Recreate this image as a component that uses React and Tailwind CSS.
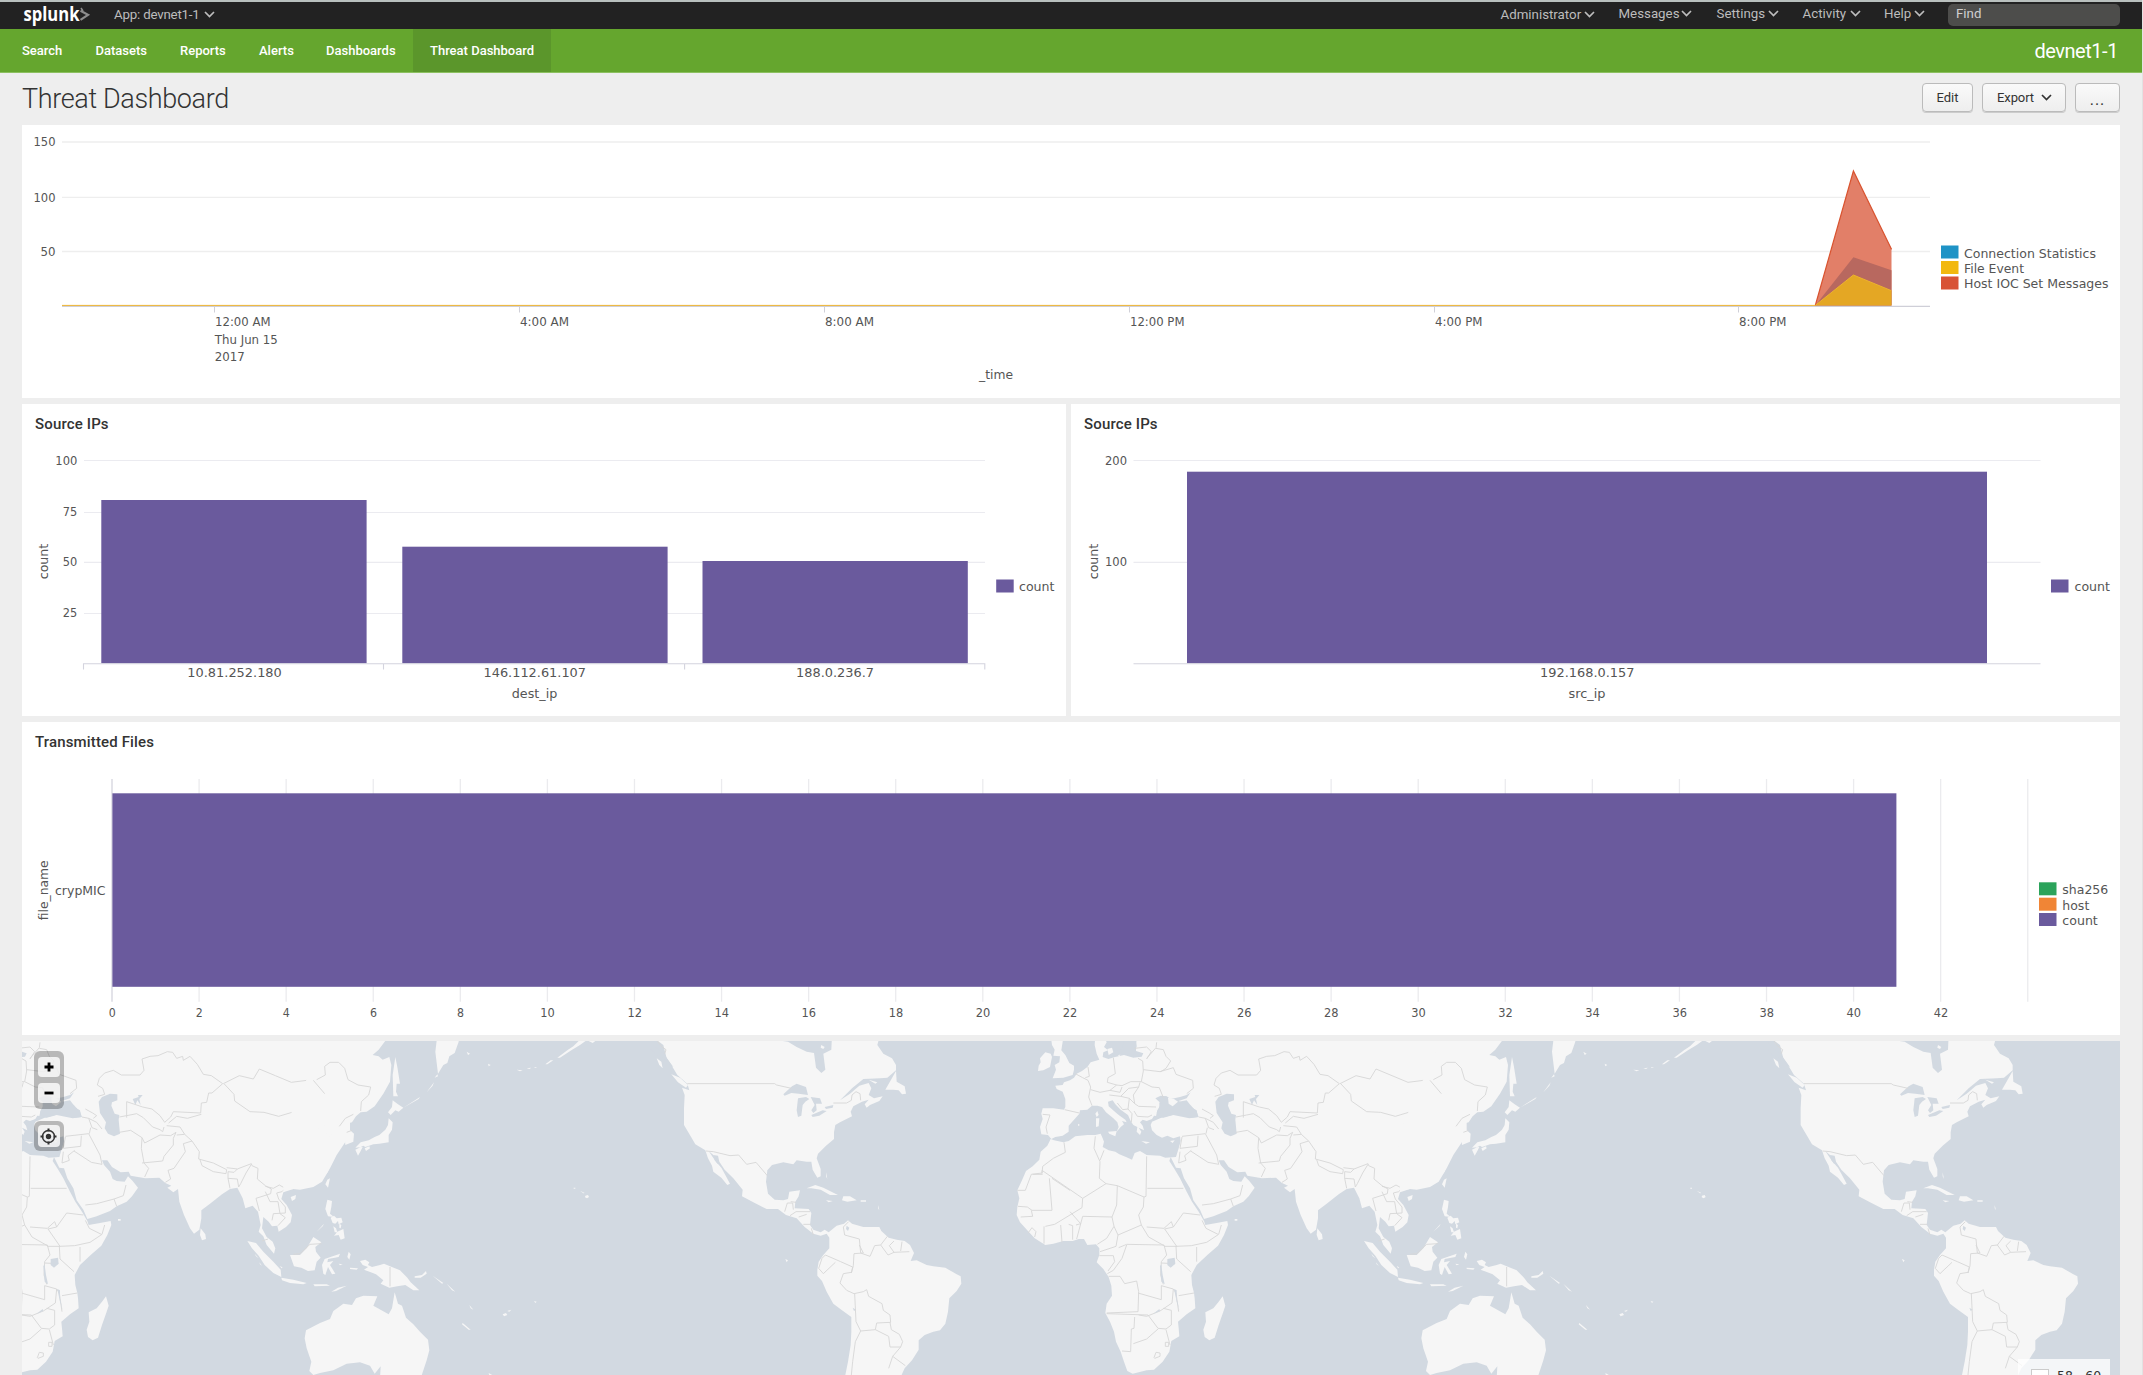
import React from "react";

const PURPLE = "#6a5a9d";

/* ---------- shared bits ---------- */

function Caret({ className = "" }) {
  return (
    <svg className={"shrink-0 " + className} width="11" height="7" viewBox="0 0 11 7" fill="none" stroke="currentColor" strokeWidth="1.7">
      <path d="M1 1 L5.5 5.5 L10 1" />
    </svg>
  );
}

function Label({ x, y, w, size = 12.5, anchor = "start", children, fill = "#555" }) {
  return (
    <text
      x={x}
      y={y - 0.4}
      fontSize={size}
      textAnchor={anchor}
      textLength={w}
      lengthAdjust="spacingAndGlyphs"
      fill={fill}
    >
      {children}
    </text>
  );
}

function VLabel({ x, y, w, children }) {
  return (
    <text
      transform={`translate(${x} ${y}) rotate(-90)`}
      fontSize="13"
      textAnchor="middle"
      textLength={w}
      lengthAdjust="spacingAndGlyphs"
      fill="#555"
    >
      {children}
    </text>
  );
}

function Swatch({ x, y, fill }) {
  return <rect x={x} y={y} width="17.5" height="13" fill={fill} />;
}

function Chart({ x, y, w, h, className = "", children }) {
  return (
    <svg
      className={"block [font-family:'DejaVu_Sans',sans-serif] " + className}
      width={w}
      height={h}
      viewBox={`${x} ${y} ${w} ${h}`}
    >
      {children}
    </svg>
  );
}

/* ---------- header ---------- */

const MENUS = [
  { label: "Administrator", cls: "w-[118px] pt-px", text: "w-[80px]" },
  { label: "Messages", cls: "w-[98px]", text: "w-[59px]" },
  { label: "Settings", cls: "w-[86px]", text: "w-[48px]" },
  { label: "Activity", cls: "w-[81.5px]", text: "w-[44px]" },
  { label: "Help", cls: "w-[64px]", text: "w-[27px]" },
];

function TopBar() {
  return (
    <div className="flex h-[29px] items-start border-t-2 border-[#b9c0be] bg-[#222] text-[13.3px] leading-[16px] text-[#bdbdbd]">
      <svg className="ml-[22px] block shrink-0 overflow-visible" width="70" height="27" viewBox="22 2 70 27">
        <text x="23.5" y="20.6" fontSize="20" fontWeight="700" textLength="56" lengthAdjust="spacingAndGlyphs" fill="#fff" className="[font-family:'Open_Sans',sans-serif]">
          splunk
        </text>
        <path d="M80.5 10.8 L88 14.9 L80.5 19.8" fill="none" stroke="#8d8d8d" strokeWidth="2.2" />
        <path d="M81 8 L83 11" stroke="#8d8d8d" strokeWidth="1.5" />
      </svg>
      <div className="ml-[22px] mt-[5px] flex">
        <span className="w-[90px] whitespace-nowrap tracking-[-0.2px]">App: devnet1-1</span>
        <Caret className="mt-[4px]" />
      </div>
      <div className="ml-auto mt-[4px] flex">
        {MENUS.map((m) => (
          <div key={m.label} className={"flex whitespace-nowrap " + m.cls}>
            <span className={m.text}>{m.label}</span>
            <Caret className="ml-[3px] mt-[4px]" />
          </div>
        ))}
      </div>
      <div className="mr-[22px] mt-[2px] h-[22px] w-[172px] rounded-[5px] bg-[#4d4d4b] pl-[8px] pt-[2px] text-[#d0d0d0]">Find</div>
    </div>
  );
}

const TABS = [
  { label: "Search", cls: "w-[73.5px]" },
  { label: "Datasets", cls: "w-[84.5px]" },
  { label: "Reports", cls: "w-[79px]" },
  { label: "Alerts", cls: "w-[67px]" },
  { label: "Dashboards", cls: "w-[87px]" },
];

function NavBar() {
  return (
    <div className="flex h-[44px] border-b border-[#8cc060] bg-[#65a62e] text-[13px] font-medium leading-[44px] text-white">
      <div className="flex pl-[22px]">
        {TABS.map((t) => (
          <div key={t.label} className={t.cls}>{t.label}</div>
        ))}
      </div>
      <div className="w-[138px] whitespace-nowrap bg-[#5b962b] pl-[17px]">Threat Dashboard</div>
      <div className="ml-auto mr-[24px] text-[20px] font-normal tracking-[-0.45px]">devnet1-1</div>
    </div>
  );
}

function TitleRow() {
  const btn =
    "flex h-[29px] items-center rounded-[4px] border border-[#bbb] bg-gradient-to-b from-[#fafafa] to-[#eee] text-[13px] text-[#333] shadow-[0_1px_0_#ccc]";
  return (
    <div className="flex h-[52px] items-start pl-[22px] pr-[22px]">
      <h1 className="mt-[9px] text-[27px] font-light leading-[34px] tracking-[-0.36px] text-[#333]">Threat Dashboard</h1>
      <div className="ml-auto mt-[10px] flex gap-[9px]">
        <button className={btn + " w-[51px] justify-center"}>Edit</button>
        <button className={btn + " w-[84px] pl-[14px] tracking-[-0.1px]"}>
          Export
          <Caret className="ml-[7px]" />
        </button>
        <button className={btn + " w-[45px] justify-center pt-[4px] text-[16px] tracking-[1px]"}>...</button>
      </div>
    </div>
  );
}

/* ---------- charts ---------- */

const TIME_TICKS = [
  [214.5, "12:00 AM", 55.5],
  [519.5, "4:00 AM", 49],
  [824.5, "8:00 AM", 49],
  [1129.5, "12:00 PM", 54.5],
  [1434.5, "4:00 PM", 47.5],
  [1738.5, "8:00 PM", 47.5],
];

function Timeline() {
  return (
    <Chart x={22} y={125} w={2098} h={273} className="bg-white">
      {[["150", 142, 22], ["100", 197.3, 22], ["50", 251.5, 15]].map(([t, y, w]) => (
        <g key={t}>
          <path d={`M62 ${y}H1930`} stroke="#eeeeee" strokeWidth="1.3" />
          <Label x={55.5} y={y + 4.6} w={w} anchor="end">{t}</Label>
        </g>
      ))}
      <path d="M62 306.4H1930" stroke="#cfcfd8" strokeWidth="1.2" />
      <path d="M1815.3 305.5L1853.4 171L1891.5 249.3V305.5Z" fill="#e27f68" />
      <path d="M1815.3 305.5L1853.4 257.3L1891.5 270.3V305.5Z" fill="#b8685f" />
      <path d="M1815.3 305.5L1853.4 275L1891.5 290.7V305.5Z" fill="#e4a724" />
      <path d="M1815.3 305.5L1853.4 171L1891.5 249.3" fill="none" stroke="#d9532f" strokeWidth="1.2" />
      <path d="M62 305.4H1815.3L1853.4 275L1891.5 290.7" fill="none" stroke="#edb32f" strokeWidth="1" />
      {TIME_TICKS.map(([x, t, w]) => (
        <g key={x}>
          <path d={`M${x} 307V312.5`} stroke="#d0d0d8" strokeWidth="1" />
          <Label x={x + 0.5} y={326.6} w={w}>{t}</Label>
        </g>
      ))}
      <Label x={214.8} y={344} w={63}>Thu Jun 15</Label>
      <Label x={214.8} y={361.3} w={30}>2017</Label>
      <Label x={996} y={379.5} w={34} anchor="middle">_time</Label>
      <Swatch x={1941} y={245.5} fill="#1e93c6" />
      <Swatch x={1941} y={261} fill="#f2b80f" />
      <Swatch x={1941} y={276.5} fill="#d85336" />
      <Label x={1964} y={258} w={132} size={13}>Connection Statistics</Label>
      <Label x={1964} y={273.3} w={60} size={13}>File Event</Label>
      <Label x={1964} y={288.7} w={144.5} size={13}>Host IOC Set Messages</Label>
    </Chart>
  );
}

function PanelTitle({ children }) {
  return <h3 className="h-[40px] pl-[13px] pt-[8.5px] text-[15px] font-medium leading-[22px] tracking-[0.15px] text-[#333]">{children}</h3>;
}

function DestIps() {
  const bars = [
    [101.3, 500, 187.3, 94.5, "10.81.252.180"],
    [402.3, 546.7, 483.5, 102.5, "146.112.61.107"],
    [702.5, 561, 796, 78, "188.0.236.7"],
  ];
  return (
    <section className="w-[1044px] bg-white">
      <PanelTitle>Source IPs</PanelTitle>
      <Chart x={22} y={444} w={1044} h={272}>
        {[["100", 460.5, 22, 465], ["75", 512.5, 14.5, 516.3], ["50", 562.3, 14.5, 566.5], ["25", 613.5, 14.5, 617]].map(([t, y, w, ty]) => (
          <g key={t}>
            <path d={`M84 ${y}H985`} stroke="#ebebf0" strokeWidth="1.2" />
            <Label x={77.3} y={ty} w={w} anchor="end">{t}</Label>
          </g>
        ))}
        {bars.map(([x, y, lx, lw, t]) => (
          <g key={t}>
            <rect x={x} y={y} width="265.3" height={663.3 - y} fill={PURPLE} />
            <Label x={lx} y={677.3} w={lw} size={13}>{t}</Label>
          </g>
        ))}
        <path d="M83.5 669.5V663.7H984.8V669.5M383.5 664V669.5M684.6 664V669.5" fill="none" stroke="#d4d4de" strokeWidth="1.1" />
        <Label x={511.8} y={698.4} w={45.5} size={13}>dest_ip</Label>
        <VLabel x={48} y={561.5} w={35.5}>count</VLabel>
        <Swatch x={996.2} y={579.5} fill={PURPLE} />
        <Label x={1019} y={591.5} w={35.5} size={13}>count</Label>
      </Chart>
    </section>
  );
}

function SrcIps() {
  return (
    <section className="w-[1049px] bg-white">
      <PanelTitle>Source IPs</PanelTitle>
      <Chart x={1071} y={444} w={1049} h={272}>
        {[["200", 460.5, 465], ["100", 562.3, 566.5]].map(([t, y, ty]) => (
          <g key={t}>
            <path d={`M1133.5 ${y}H2040.5`} stroke="#ebebf0" strokeWidth="1.2" />
            <Label x={1127} y={ty} w={22} anchor="end">{t}</Label>
          </g>
        ))}
        <rect x="1187" y="471.7" width="800" height="191.6" fill={PURPLE} />
        <path d="M1133.5 663.7H2040.5" stroke="#d4d4de" strokeWidth="1.1" />
        <Label x={1540} y={677.3} w={94.5} size={13}>192.168.0.157</Label>
        <Label x={1568.5} y={698.4} w={37} size={13}>src_ip</Label>
        <VLabel x={1098} y={561.5} w={35.5}>count</VLabel>
        <Swatch x={2051} y={579.5} fill={PURPLE} />
        <Label x={2074.5} y={591.5} w={35.5} size={13}>count</Label>
      </Chart>
    </section>
  );
}

function TransmittedFiles() {
  const ticks = Array.from({ length: 23 }, (_, i) => i * 2);
  return (
    <section className="bg-white">
      <PanelTitle>Transmitted Files</PanelTitle>
      <Chart x={22} y={762} w={2098} h={273}>
        {ticks.map((t) => {
          const x = 112 + t * 43.54;
          return (
            <g key={t}>
              <path d={`M${x} 779V1001.7`} stroke={t === 0 ? "#d4d4de" : "#ebebee"} strokeWidth="1.3" />
              {t < 44 && (
                <Label x={x + 0.2} y={1017.8} w={t < 10 ? 7 : 14.5} anchor="middle">{String(t)}</Label>
              )}
            </g>
          );
        })}
        <rect x="112.4" y="793.3" width="1784" height="193.5" fill={PURPLE} />
        <Label x={55} y={895.7} w={50.5} size={13}>crypMIC</Label>
        <VLabel x={47.7} y={890.3} w={60}>file_name</VLabel>
        <Swatch x={2039} y={882.3} fill="#2ba35b" />
        <Swatch x={2039} y={897.7} fill="#f08536" />
        <Swatch x={2039} y={913} fill={PURPLE} />
        <Label x={2062.3} y={894.8} w={46} size={13}>sha256</Label>
        <Label x={2062.3} y={910.2} w={27} size={13}>host</Label>
        <Label x={2062.3} y={925.4} w={35.5} size={13}>count</Label>
      </Chart>
    </section>
  );
}

/* ---------- map ---------- */

const LAND = "#f6f6f6";
const WATER = "#d2d9e1";
const BORDER = "#d7d7d7";

/* Europe, Africa and western Asia */
function West() {
  return (
    <g>
      <g fill={LAND}>
        <path d="M410 0L408 48L430 55L425 65L400 68L372 60L345 66L325 72L308 66L310 52L324 46L312 36L320 22L310 0L286 0L284 30L290 56L298 74L272 82L262 96L246 108L230 116L222 128L210 136L192 142L188 150L166 152L170 162L188 170L196 192L196 216L192 224L160 220L128 220L124 236L128 252L120 276L124 298L144 300L154 312L166 306L188 302L206 290L206 272L226 250L238 236L240 226L262 224L276 212L292 212L306 216L318 232L340 250L352 262L356 276L350 290L362 276L372 268L366 258L380 262L376 254L356 240L342 228L326 214L324 200L338 196L346 208L362 224L384 240L392 258L400 270L412 276L410 290L420 300L424 290L416 278L432 286L428 272L420 262L428 254L440 258L456 252L462 242L478 244L470 232L478 218L478 204L484 192L498 184L504 190L516 196L506 206L520 212L536 200L560 196L568 206L590 230L596 246L576 248L556 244L530 236L508 242L484 248L470 254L456 260L452 270L456 286L470 300L486 308L502 302L520 310L540 304L542 318L536 340L528 366L496 368L480 362L440 360L420 348L404 354L396 374L378 366L358 358L346 350L326 346L308 336L312 320L308 310L302 296L286 300L262 300L226 304L206 318L190 322L162 316L152 312L142 332L122 350L118 374L98 394L78 408L66 436L52 466L58 490L52 516L50 540L60 562L86 590L104 610L136 630L160 626L190 618L218 618L236 612L252 612L262 630L288 628L298 640L298 660L290 682L310 702L326 726L334 752L336 782L320 806L316 834L330 860L342 890L348 920L362 950L372 980L382 1008L398 1016L440 1006L462 1004L488 980L508 950L514 918L538 904L536 880L534 860L560 838L586 820L584 790L582 774L576 750L574 720L590 690L622 660L654 632L672 600L684 570L682 558L650 564L616 570L612 558L596 530L576 500L560 470L540 430L522 400L508 378L512 366L528 398L542 400L552 430L570 460L580 496L600 524L612 552L640 544L680 528L700 514L730 500L746 484L764 458L748 438L734 424L724 440L700 438L688 432L680 410L662 390L656 376L672 376L686 396L712 412L736 410L742 422L786 430L828 428L846 444L864 452L852 458L870 472L884 462L888 500L902 540L920 580L932 596L948 584L954 550L954 526L980 506L1016 478L1040 462L1062 458L1078 490L1086 520L1108 512L1124 530L1132 570L1126 590L1140 604L1150 630L1172 656L1176 640L1168 620L1150 606L1136 580L1140 546L1156 560L1166 574L1182 572L1186 590L1208 576L1222 562L1226 540L1210 510L1194 492L1200 472L1230 462L1250 464L1290 456L1316 440L1340 400L1360 360L1400 300L1400 0Z" />
        <path d="M152 0L156 30L164 44L160 62L180 64L178 82L164 90L168 104L158 130L190 128L218 120L222 104L222 92L208 84L196 60L184 46L188 20L192 0Z" />
        <path d="M120 70L136 52L152 56L156 66L150 96L130 106L114 108L116 92L122 82Z" />
        <path d="M292 228L296 240L290 246L286 236ZM288 250H298L296 274L288 276Z" />
        <path d="M324 290L350 288L346 304L328 296ZM424 318L450 322L438 326ZM510 318L524 316L518 324ZM234 266L240 270L234 273Z" />
        <path d="M668 784L676 812L670 830L656 870L644 908L628 916L614 906L610 884L618 860L616 832L640 820L656 800Z" />
        <path d="M952 580L966 598L968 612L956 616L950 600ZM704 552h8v5h-8Z" />
        <path d="M322 42l14-4 4 14-14 8ZM350 58l12-2-4 8Z" />
      </g>
      <g fill={WATER}>
        <path d="M646 200L656 186L680 176L702 178L702 196L686 202L684 212L694 236L708 240L706 254L710 296L692 304L674 296L664 280L668 262L650 234Z" />
        <path d="M466 190L482 182L500 184L512 192L540 186L560 180L572 172L560 190L536 198L560 210L590 226L594 246L568 250L520 240L490 248L468 244L472 226L484 206Z" />
        <path d="M504 188L522 192L534 200L518 214L506 206Z" fill={LAND} />
        <path d="M748 192L766 186L764 180L778 180L768 192L772 210L762 196L756 210Z" />
        <path d="M360 0H404L410 34L400 62L366 58L340 64L345 50L366 42L372 20Z" />
      </g>
      <g fill="none" stroke={BORDER} strokeWidth="2.8" strokeLinejoin="round">
        <path d="M340 68L346 116L324 128L322 142L350 150L366 152L392 140L424 140L430 108L428 78L414 70M424 140L456 156L478 158L490 188M430 104L480 110L520 98L528 118L578 136L580 160L560 176M440 70L468 38L470 22M404 40L440 36L454 50L440 72M468 40L490 44L498 64L512 78L498 100L482 110M226 116L248 128L264 136L272 156L266 186L276 212M264 96L268 124L256 128M272 164L300 172L330 166L350 150M328 180L362 184L386 160L416 156L420 142M366 156L360 172L330 166M362 184L388 190L404 206L416 214L468 216M404 206L400 180L416 156M388 190L384 222L368 224L352 204M384 222L396 236L394 262M402 228L412 244L444 246L456 240M194 224L238 234M128 238L150 240L138 276L142 296" />
        <path d="M644 184L664 178L658 160L642 150L648 130L664 114L690 106L714 120L770 120L782 106L776 72L800 64L824 62L852 50L868 52L880 70L898 64L900 76L920 64L942 88L960 118L984 122L1018 146L986 174L976 174L970 202L954 204L952 234L870 230L862 246L844 262L830 242L806 222L778 216L730 200L730 248M708 246L740 240L760 236L780 248L808 276L830 284L838 290L842 276M856 264L880 244L912 250L954 238M708 292L742 286L776 308L784 324L830 300L862 302L878 292L870 310L870 330L842 364L838 378L776 384M776 308L774 340L782 384L796 400L784 426M880 300L904 298L926 318L900 326L906 350L872 400L854 406L862 432L846 442M904 298L890 276L850 272M926 318L948 350L946 372L990 384L1030 404L1028 416L990 410L956 392L950 374M1030 398L1062 402L1104 386L1106 392L1124 400L1122 432L1146 452L1164 462L1162 476L1118 490L1128 528M1062 402L1052 412L1034 410L1034 430L1040 460M1034 430L1062 432L1066 456M1104 388L1088 414L1072 446L1066 456M1146 454L1170 460L1188 450L1206 460L1196 470L1180 474L1186 492L1206 516L1206 534L1170 536L1166 556M1146 470L1160 500L1184 500L1190 536L1206 548L1184 572M1020 146L1068 122L1110 132L1128 102L1176 122L1224 142L1286 134L1310 140M1022 146L1052 178L1054 198L1100 230L1142 232L1186 244L1246 226L1248 206L1280 198L1320 178L1304 164L1286 160L1292 138" />
        <path d="M606 222L628 234L640 242L630 250M596 246L616 250L626 278L642 284M616 250L640 262L656 282M618 296L622 278M616 296L546 304M616 296L650 360L656 388M546 306L540 340L592 334L594 302M572 348L624 382L656 388M540 350L536 384L558 376L554 362L574 346M606 510L640 506L692 492L720 482L728 450M692 492L700 514M192 322L196 352L160 370L128 394L126 416M52 466L76 466L94 418L126 414L126 406L248 490L318 446L298 430L300 380L282 340L286 304M98 418H128M318 446L352 452L432 486L438 484L440 364M300 376L312 346M442 460H550M148 430L156 526L96 526M156 430L210 466M248 490L246 518L210 540L164 568L136 574M96 526L82 516L54 514M94 526L98 544L62 546M432 486L430 516L416 540L424 570L354 600L342 574L336 546L248 544L230 612M352 452L350 510L336 546M210 530L242 566L228 570M182 570L186 622M206 568L218 572L218 614M96 578L84 594M96 578L108 590L104 606M132 574L132 626M342 574L320 610L292 628M354 600L348 634L300 650M356 638L380 628L492 630L500 660L484 680L482 720L490 748M380 630L366 670L340 706L322 716M298 662H340L344 680L324 708M440 576L492 580L514 560L520 576L494 582L530 634L492 634M424 570L446 606L492 632M520 576L550 534L600 540M528 634L574 632L620 622L656 598L664 570M606 556L618 580L654 598M590 636L590 680M528 634L530 672L572 710M484 684L524 686M536 782L582 774M326 724H360L374 746L410 738L416 770L414 830L320 834M414 774L484 794L484 752L520 762L516 804L480 828L440 844L416 840M320 836L444 840L474 880L498 882L514 870L514 826L490 820M404 846L402 880L394 882L392 950L366 948M400 926L440 912L474 882M498 884L510 930M462 968L468 952L480 954L480 964L464 970ZM496 922h10v12h-10ZM520 762L528 774L536 830" />
      </g>
      <path fill={WATER} d="M502 672L524 668L526 686L512 698L502 690ZM480 692L484 740L494 748L488 720L484 690ZM522 762L530 766L530 790L538 826L530 800ZM460 836L478 822L480 828Z" />
    </g>
  );
}

/* Eastern Asia and Australia */
function East() {
  return (
    <g>
      <g fill={LAND}>
        <path d="M980 0L1172 0L1154 20L1136 44L1118 60L1136 64L1148 74L1168 66L1174 90L1170 140L1150 176L1124 214L1100 230L1082 232L1068 244L1056 262L1040 266L1044 280L1062 296L1060 320L1036 330L1034 304L1026 280L1010 278L994 282L1002 268L988 256L974 270L954 280L968 286L974 296L998 292L994 302L970 318L984 340L992 356L978 362L992 380L984 410L964 436L940 452L900 460L860 464L850 470L844 300Z" />
        <path d="M1186 66L1192 96L1200 146L1190 146L1188 170L1194 184L1180 184L1178 120Z" />
        <path d="M1178 196L1194 208L1210 218L1196 230L1186 226L1172 240L1164 232L1176 216ZM1166 250L1178 262L1176 284L1166 300L1166 322L1138 326L1120 328L1096 336L1090 332L1066 344L1074 362L1082 348L1088 336L1066 338L1082 322L1106 316L1124 306L1138 300L1156 284L1164 270ZM1094 340l14-6 2 6-12 8Z" />
        <path d="M990 430L984 458L976 448L982 434ZM872 486L888 480L886 492L876 498ZM982 494L996 498L994 516L990 536L1002 546L984 544L976 522ZM992 548l10-6 8 8 14-2 4 14-12 6-2-10-8 8-8-2ZM1012 590L1030 582L1034 610L1022 614L1016 600L1002 602ZM972 566L950 590L968 574ZM1000 574l8 6 4 12-8 0ZM1018 566l6 4-2 10-4-2Z" />
        <path d="M742 618L768 624L790 650L820 680L842 704L844 726L820 714L794 690L776 662L756 640Z" />
        <path d="M870 660L900 660L920 640L940 606L964 622L946 636L948 650L962 668L950 680L944 706L924 708L904 698L882 694Z" />
        <path d="M844 728L880 734L920 744L910 748L870 744L846 736ZM940 748L980 748L990 752L944 754ZM994 770L1014 758L1040 752L1008 768ZM974 672L1020 656L1016 666L984 672L982 682L1000 678L990 690L1006 716L996 718L984 696L976 720L970 716L966 690ZM1046 650l6 8-4 16-6-8ZM1050 698l24 2-4 4-20-2ZM1016 686l12 2-8 3ZM840 692l8 6-4 2ZM764 656l12 14-8-6ZM778 682l8 10-6-4Z" />
        <path d="M1080 678L1096 674L1108 682L1104 690L1116 696L1140 690L1152 686L1170 694L1200 706L1222 728L1232 742L1258 766L1240 766L1216 750L1192 754L1168 758L1142 746L1150 736L1128 718L1092 704L1104 696L1088 690ZM1244 724L1266 720L1278 708L1280 716L1262 728L1244 728ZM1298 722L1330 744L1326 746ZM1340 746L1366 770L1356 766Z" />
        <path d="M1184 772L1194 806L1206 812L1218 848L1240 868L1260 890L1284 914L1288 946L1280 976L1262 1030L1140 1030L1142 994L1124 1016L1110 992L1080 982L1040 986L1000 1006L960 1014L940 1020L928 1008L934 980L920 940L914 910L918 886L960 864L990 852L1000 828L1030 806L1056 810L1068 790L1090 782L1132 784L1120 812L1166 838L1176 820Z" />
        <path d="M1312 0L1306 50L1314 116L1330 90L1342 84L1348 64L1364 54L1376 20L1376 0Z" />
        <path d="M1388 864L1412 884L1406 884L1386 868ZM1210 218L1260 186L1256 192ZM1280 172L1302 142L1298 152ZM1304 128l8-10 2 6Z" />
      </g>
      <path d="M950 134L976 120L974 94L990 82L1016 82L1034 100L1044 134L1074 150L1112 156L1106 180L1084 200L1082 228M1060 238L1036 250L1018 274M1040 292L1056 286M940 136L974 176M1170 696V754M880 658L900 656L930 628L964 626M786 618L804 612" fill="none" stroke={BORDER} strokeWidth="2.8" />
    </g>
  );
}

/* Pacific islands */
function Pacific() {
  return (
    <g fill={LAND}>
      <path d="M660 14L682 14L660 30L634 46L600 68L592 68L624 44L640 34ZM686 18h20l-8 6ZM556 88l16-12 8 0-18 12ZM384 86l8 4-6 4ZM320 50l10 6-6 4ZM470 104l18 2-8 3ZM500 100l14-2-6 4ZM524 96l8 0-8 3ZM676 482l8-2 3 6-6 4-6-3ZM641 458h5v3h-5ZM660 467l14 7-4 1ZM428 838l10-4 4 6-10 4ZM442 828l12-4-6 6ZM522 798l8 2-4 4ZM328 810l12 14-8-4ZM386 1014l14 8-12 0Z" />
    </g>
  );
}

/* North and South America */
function Americas() {
  return (
    <g>
      <g fill={LAND}>
        <path d="M0 0L690 0L682 30L700 56L726 70L738 90L738 106L712 128L690 130L640 132L606 160L570 196L600 176L628 152L656 144L664 160L656 180L672 190L698 184L688 198L660 210L650 218L644 208L656 194L636 200L610 214L602 230L606 244L570 262L556 270L552 292L552 312L528 332L504 356L500 370L512 402L512 424L502 428L488 404L484 380L470 380L440 376L430 388L400 382L366 390L352 406L348 440L354 476L374 494L400 496L414 492L418 470L450 466L446 484L436 500L434 520L476 522L484 534L480 570L490 584L512 592L524 584L536 592L560 572L582 566L594 556L606 566L640 576L688 576L694 588L716 608L740 614L764 618L780 630L792 654L782 678L800 676L830 690L850 694L886 698L920 718L932 724L934 746L920 768L898 790L894 830L886 866L870 886L850 890L824 900L806 916L806 944L786 976L764 1000L750 1030L584 1030L594 980L602 930L604 890L604 846L576 826L550 806L530 770L516 738L502 722L502 704L506 680L520 660L538 640L538 608L530 596L512 602L490 596L464 576L440 550L408 540L384 522L350 522L310 502L276 484L278 464L250 430L224 404L208 380L204 362L190 360L194 376L214 398L226 420L240 446L232 450L214 428L190 410L186 392L174 370L166 346L136 328L122 304L102 270L102 220L104 180L96 158L118 166L112 146L82 120L64 90L50 70L40 30Z" />
        <path d="M20 70L34 80L38 100L28 90ZM64 118L90 128L114 150L108 158L84 142ZM738 108L706 164L730 164L746 166L756 178L768 176L764 154L740 140ZM656 134L682 142L676 146ZM470 460L496 450L520 458L564 480L540 480L512 464L484 460ZM580 484L600 484L620 496L592 500L576 496ZM528 496L548 498L536 502ZM632 496h16v4h-16ZM528 412l4 20-4-8ZM406 672l8 4-4 6ZM684 510l4 16-4-6Z" />
      </g>
      <g fill={WATER}>
        <path d="M398 0H546L544 44L520 56L526 104L514 114L498 98L492 54L470 50L440 36L414 20L398 18Z" />
        <path d="M400 178L426 154L440 146L468 156L474 180L446 176L424 174L404 182ZM444 190L468 186L478 192L466 200L458 210L454 242L444 246L440 226ZM482 186L510 190L516 206L498 206L500 226L490 234L484 226L494 210ZM484 240L518 226L530 228L508 242L488 246ZM524 216L550 210L548 218L528 222Z" />
        <path d="M590 572l8 6-4 10-6-6ZM608 818l10 6-6 4ZM176 348L190 360L208 384L202 386L188 366Z" />
        <path d="M0 0L8 30L44 60L70 96L62 92L40 70L18 60L0 40Z" />
      </g>
      <path d="M514 30l10 6-4 6-8-4Z" fill={LAND} />
      <g fill="none" stroke={BORDER} strokeWidth="2.8" strokeLinejoin="round">
        <path d="M112 146H374L380 150L424 160M550 204H590L604 196L606 180L618 170L630 176L632 196M168 348L190 350L240 362L266 360L290 388L318 382L352 422M404 530L412 504L428 504L430 524M422 500L438 502M420 542L438 530L480 530M446 546L470 538M460 568H482M484 580L490 600" />
        <path d="M596 560L580 576L584 600L628 612L632 654L660 664L674 632L692 630L712 604M692 630L714 660L732 652L718 632L732 618M732 652L778 650M756 620L752 648M612 656L610 692L604 714L608 696L572 680L526 660L516 670L506 700L520 716L556 682M604 712L580 716L570 744L590 766L612 776L640 770L650 764L656 784L696 806L700 826L720 840L722 862L680 864L676 884L632 888L618 860L614 776M676 884L716 904L720 936L752 936L758 920L748 898L724 884L720 862M632 888L616 920L608 980L604 1020M752 936L728 964L766 992M728 964L716 1000" />
        <path d="M628 630L640 654L612 656" />
        <path d="M22 18L34 34L48 44L44 56" />
      </g>
    </g>
  );
}

function MapButton({ children }) {
  return (
    <div className="flex h-[20px] w-[22px] items-center justify-center rounded-[4px] bg-white/80">{children}</div>
  );
}

function WorldMap() {
  return (
    <section className="relative h-[334px] overflow-hidden bg-[#d2d9e1]">
      <svg className="block" width="2098" height="334" viewBox="66 18 6294 1002">
        <g transform="translate(-350 0)"><West /></g>
        <East />
        <g transform="translate(1950 0)"><Americas /></g>
        <g transform="translate(1080 0)"><Pacific /></g>
        <g transform="translate(3000 0)"><West /></g>
        <g transform="translate(3350 0)"><East /></g>
        <g transform="translate(5300 0)"><Americas /></g>
        <g transform="translate(4430 0)"><Pacific /></g>
      </svg>
      <div className="absolute left-[11.5px] top-[10px] flex h-[58px] w-[30px] flex-col items-center gap-[6px] rounded-[6px] bg-black/25 pt-[6px]">
        <MapButton>
          <svg width="10" height="10" viewBox="0 0 10 10"><path d="M5 0.5V9.5M0.5 5H9.5" stroke="#000" strokeWidth="2.8" /></svg>
        </MapButton>
        <MapButton>
          <svg width="10" height="10" viewBox="0 0 10 10"><path d="M0.5 5H9.5" stroke="#000" strokeWidth="2.8" /></svg>
        </MapButton>
      </div>
      <div className="absolute left-[11.5px] top-[80px] flex h-[30px] w-[30px] items-center justify-center rounded-[6px] bg-black/25">
        <div className="flex h-[22px] w-[22px] items-center justify-center rounded-[4px] bg-white/80">
          <svg width="17" height="17" viewBox="0 0 17 17" fill="none" stroke="#333">
            <circle cx="8.5" cy="8.5" r="6" strokeWidth="1.5" />
            <circle cx="8.5" cy="8.5" r="2.7" fill="#333" stroke="none" />
            <path d="M8.5 0.5V3.5M8.5 13.5V16.5M0.5 8.5H3.5M13.5 8.5H16.5" strokeWidth="2" />
          </svg>
        </div>
      </div>
      <div className="absolute left-[1996px] top-[318px] h-[40px] w-[92px] bg-white/75 pl-[13px] pt-[10px]">
        <div className="flex items-start gap-[8px]">
          <div className="h-[14px] w-[18px] border border-[#ccc] bg-white" />
          <span className="-mt-[1px] whitespace-nowrap text-[12.5px] leading-[16px] text-[#333] [font-family:'DejaVu_Sans',sans-serif]">58 - 60</span>
        </div>
      </div>
    </section>
  );
}

export default function App() {
  return (
    <div className="h-[1375px] w-[2143px] overflow-hidden border-r border-[#e2e2e2] bg-[#eeeeee] [font-family:Roboto,sans-serif]">
      <TopBar />
      <NavBar />
      <TitleRow />
      <main className="ml-[22px] flex w-[2098px] flex-col gap-[6px]">
        <Timeline />
        <div className="flex h-[312px] justify-between">
          <DestIps />
          <SrcIps />
        </div>
        <TransmittedFiles />
        <WorldMap />
      </main>
    </div>
  );
}
